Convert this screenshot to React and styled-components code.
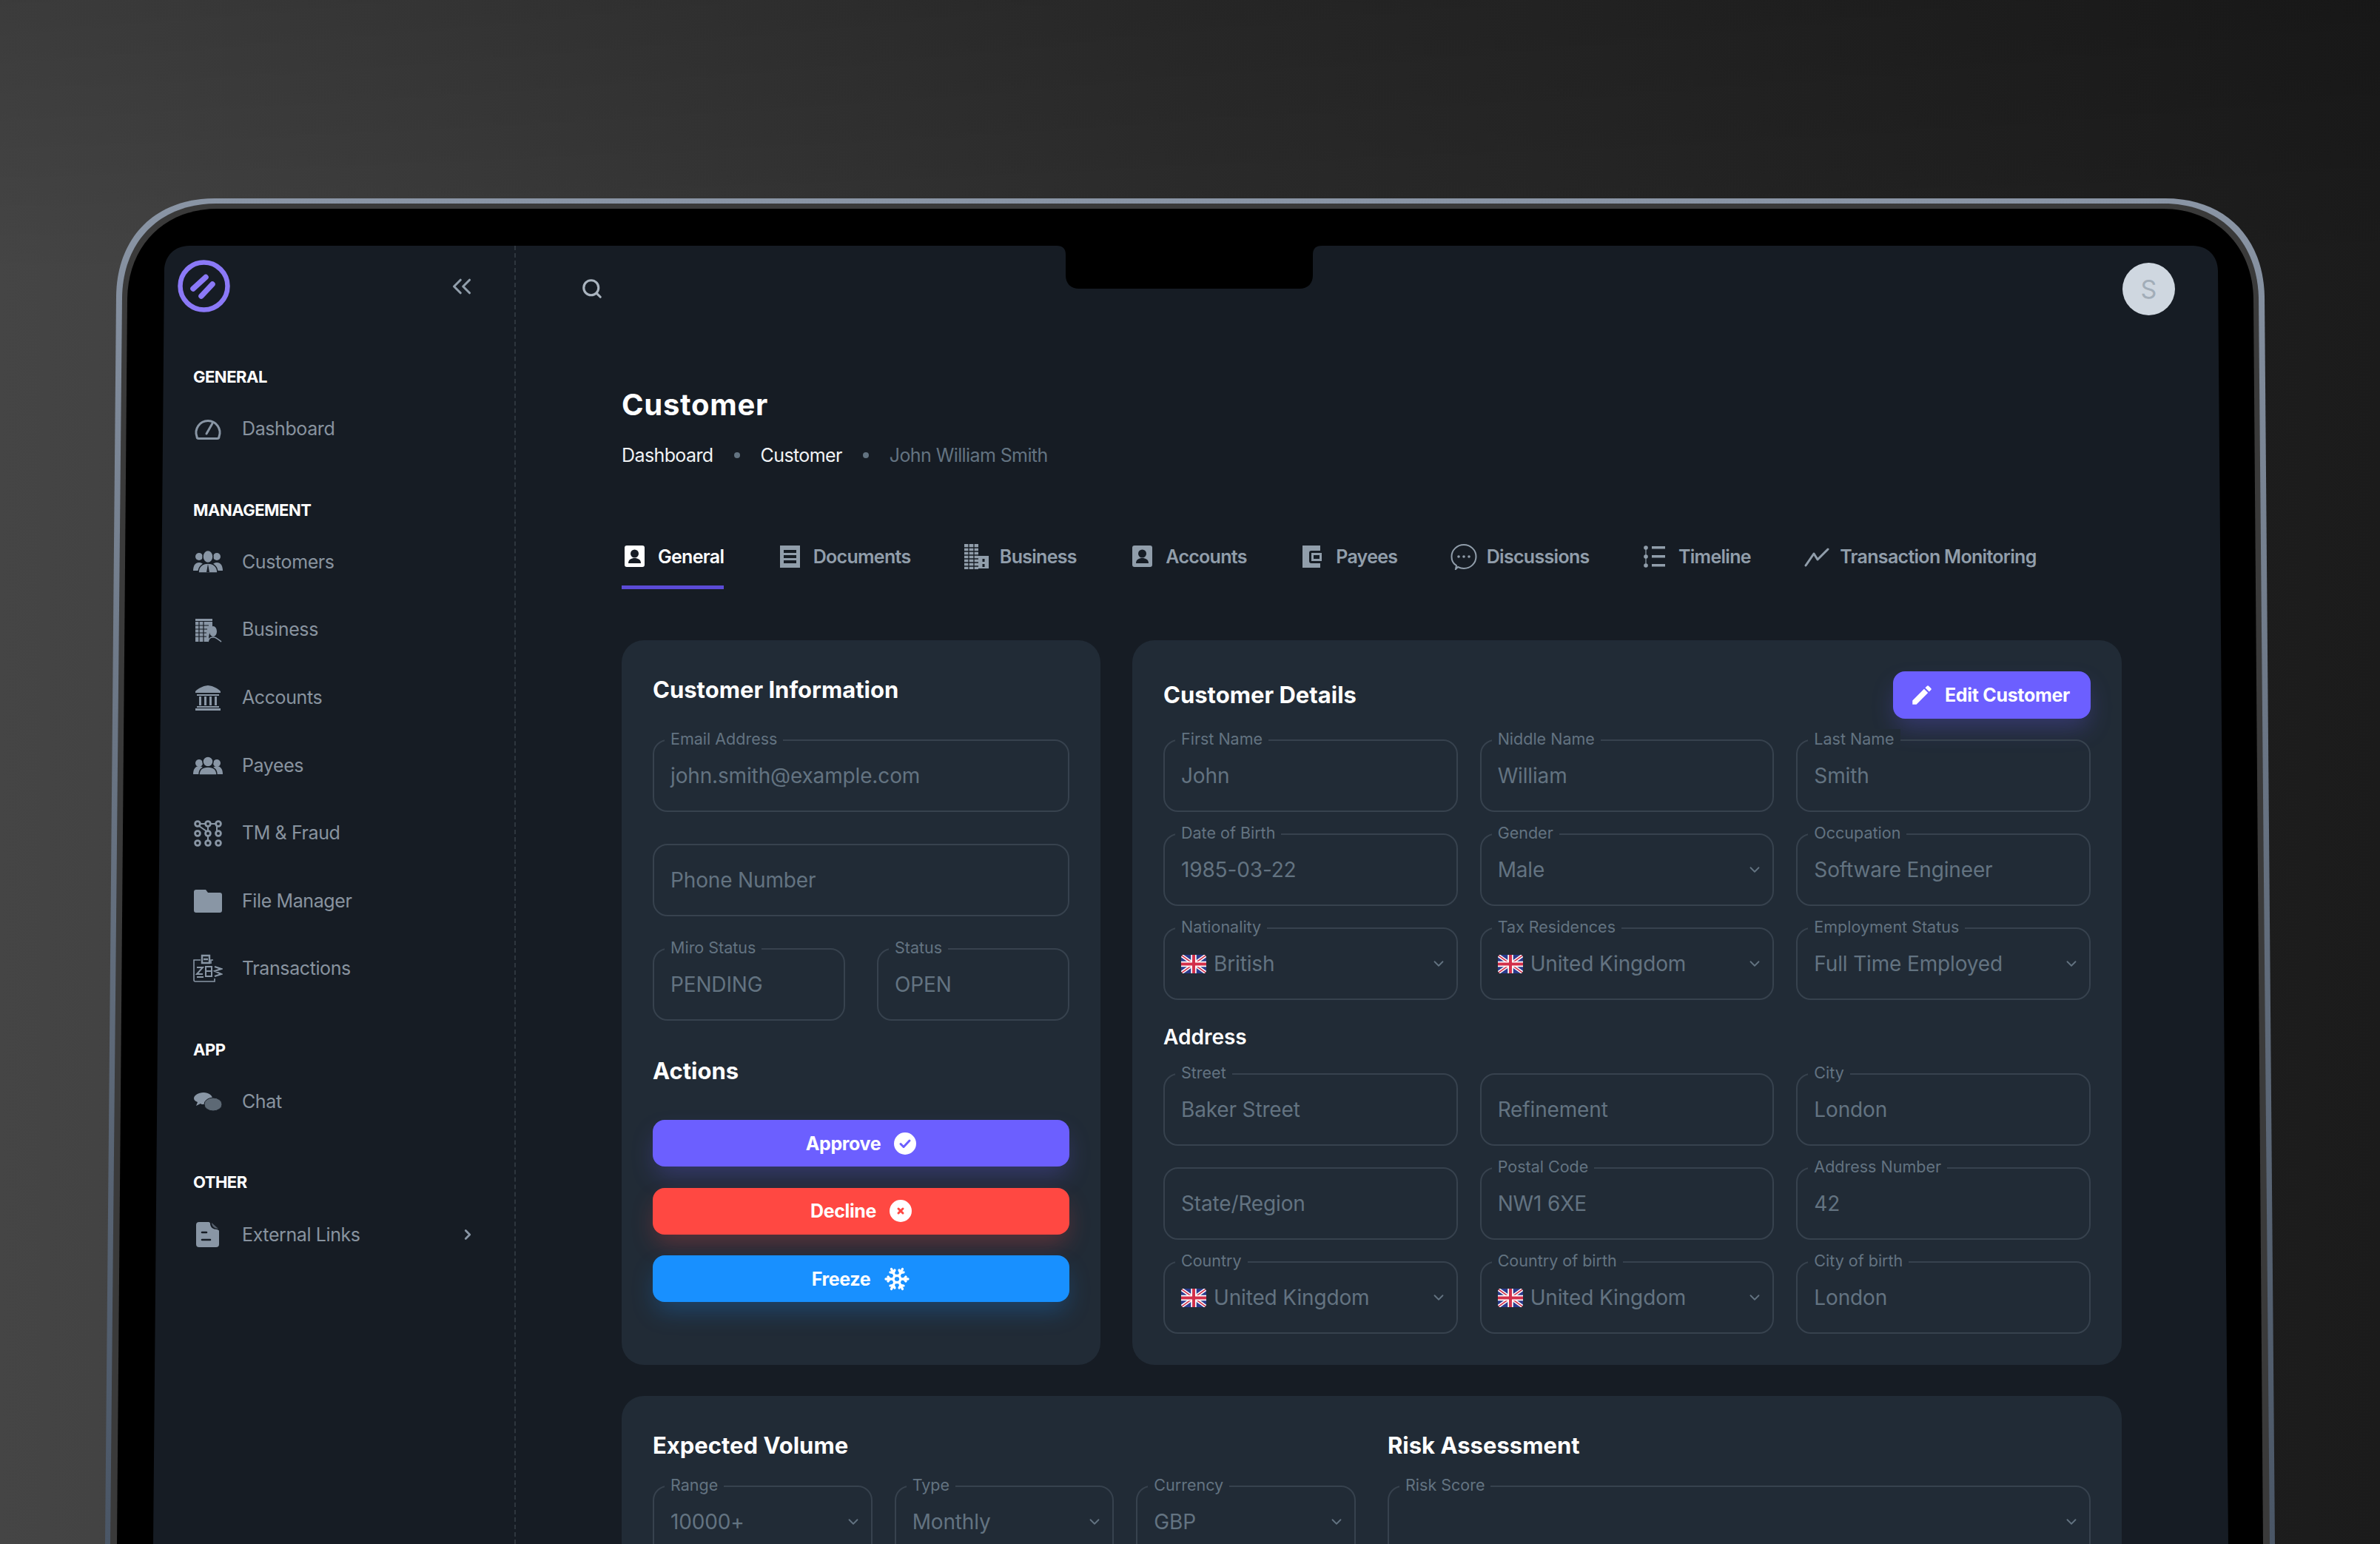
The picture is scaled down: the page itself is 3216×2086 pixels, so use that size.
import React from 'react';
import styled, { createGlobalStyle } from 'styled-components';
import { ChevronDown, ChevronRight, ChevronsLeft, Search, Snowflake } from 'lucide-react';
import { MdEdit } from 'react-icons/md';

const GlobalStyle = createGlobalStyle`
  html, body {
    margin: 0;
    padding: 0;
    background: #2b2b2b;
  }
  * { box-sizing: border-box; }
`;

const S = {
  Page: styled.div`
    position: relative;
    width: 3216px;
    height: 2086px;
    padding: 332px 0 0 222px;
    overflow: hidden;
    font-family: Inter, 'Liberation Sans', sans-serif;
    background:
      linear-gradient(180deg, rgba(0, 0, 0, 0.14) 0%, rgba(0, 0, 0, 0) 18%),
      linear-gradient(90deg, #454545 0%, #2c2c2c 50%, #1b1b1b 100%);
  `,
  Bezel: styled.svg`
    position: absolute;
    top: 0;
    left: 0;
  `,
  Screen: styled.div`
    position: relative;
    display: flex;
    width: 2775px;
    height: 1754px;
    overflow: hidden;
  `,
  Sidebar: styled.aside`
    flex: none;
    width: 475px;
    padding: 19px 0 0 39px;
    border-right: 2px dashed rgba(145, 158, 171, 0.2);
  `,
  SideHead: styled.div`
    display: flex;
    align-items: center;
    justify-content: space-between;
    height: 71px;
    margin: 0 50px 62px -21px;
  `,
  NavSection: styled.div`
    margin-bottom: 38px;
  `,
  NavLabel: styled.div`
    height: 50px;
    color: #fff;
    font-size: 22px;
    font-weight: 700;
    line-height: 50px;
    letter-spacing: -0.5px;
  `,
  NavItem: styled.div`
    display: flex;
    align-items: center;
    gap: 26px;
    height: 91.6px;
    padding-right: 52px;
    color: #88939f;
    font-size: 25px;
    line-height: 1;
    letter-spacing: -0.4px;
    svg { color: #8996a5; flex: none; }
  `,
  NavText: styled.span`
    flex: 1;
  `,
  Collapse: styled(ChevronsLeft)`
    color: #919eab;
  `,
  Main: styled.main`
    flex: 1;
    min-width: 0;
  `,
  TopBar: styled.header`
    display: flex;
    align-items: center;
    justify-content: space-between;
    height: 116px;
    padding: 0 58px 0 88px;
    color: #aab4bf;
  `,
  Avatar: styled.div`
    display: flex;
    align-items: center;
    justify-content: center;
    width: 71px;
    height: 71px;
    border-radius: 50%;
    background: #cfd7e0;
    color: #a2adb8;
    font-size: 34px;
  `,
  Content: styled.div`
    padding: 69px 130px 0 143px;
  `,
  Title: styled.h1`
    margin: 0 0 18px;
    color: #fff;
    font-size: 40px;
    font-weight: 700;
    line-height: 60px;
    letter-spacing: 0.7px;
  `,
  Crumbs: styled.nav`
    display: flex;
    align-items: center;
    height: 40px;
    color: #f1f3f5;
    font-size: 25px;
    letter-spacing: -0.6px;
  `,
  Dot: styled.span`
    width: 8px;
    height: 8px;
    margin: 0 28px;
    border-radius: 50%;
    background: #637381;
  `,
  CrumbLast: styled.span`
    color: #637381;
  `,
  Tabs: styled.div`
    display: flex;
    gap: 71.4px;
    margin: 77px 0 69px;
  `,
  Tab: styled.div`
    display: flex;
    align-items: center;
    gap: 13px;
    height: 84px;
    border-bottom: 5px solid ${(p) => (p.$active ? '#5b4bd6' : 'transparent')};
    color: ${(p) => (p.$active ? '#fff' : '#919eab')};
    font-size: 25px;
    font-weight: 600;
    letter-spacing: -0.7px;
    svg { flex: none; }
  `,
  Columns: styled.div`
    display: grid;
    grid-template-columns: 647px 1fr;
    gap: 43px;
    margin-bottom: 42px;
  `,
  Card: styled.section`
    padding: 42px;
    border-radius: 30px;
    background: #212b36;
  `,
  CardTitle: styled.h2`
    margin: 0 0 42px;
    color: #fff;
    font-size: 31px;
    font-weight: 700;
    line-height: 50px;
  `,
  DetailsHead: styled.div`
    display: flex;
    align-items: center;
    justify-content: space-between;
    height: 64px;
    margin-bottom: 28px;
    h2 { margin: 0; }
  `,
  EditButton: styled.div`
    display: flex;
    align-items: center;
    gap: 14px;
    height: 64px;
    padding: 0 28px 0 22px;
    border-radius: 16px;
    background: #6c5fff;
    color: #fff;
    font-size: 25px;
    font-weight: 700;
    letter-spacing: -0.3px;
    box-shadow: 0 16px 32px -4px rgba(108, 95, 255, 0.28);
  `,
  Stack: styled.div`
    display: flex;
    flex-direction: column;
    gap: 43px;
  `,
  Pair: styled.div`
    display: grid;
    grid-template-columns: 1fr 1fr;
    gap: 43px;
  `,
  ActionsTitle: styled.h2`
    margin: 43px 0 41px;
    color: #fff;
    font-size: 31px;
    font-weight: 700;
    line-height: 50px;
  `,
  Actions: styled.div`
    display: flex;
    flex-direction: column;
    gap: 28.5px;
  `,
  Action: styled.div`
    display: flex;
    align-items: center;
    justify-content: center;
    gap: 18px;
    height: 63px;
    border-radius: 16px;
    background: ${(p) => p.$color};
    color: #fff;
    font-size: 25px;
    font-weight: 700;
    letter-spacing: -0.4px;
    box-shadow: 0 16px 32px -4px ${(p) => p.$color}44;
  `,
  Grid: styled.div`
    display: grid;
    grid-template-columns: repeat(3, 1fr);
    gap: 29px 30px;
  `,
  SubTitle: styled.h3`
    margin: 25px 0 24px;
    color: #fff;
    font-size: 28px;
    font-weight: 600;
    line-height: 50px;
  `,
  BottomColumns: styled.div`
    display: grid;
    grid-template-columns: 1fr 1fr;
    gap: 43px;
  `,
  BottomTitle: styled.h2`
    margin: 0 0 29px;
    color: #fff;
    font-size: 31px;
    font-weight: 700;
    line-height: 50px;
  `,
  Field: styled.div`
    position: relative;
    display: flex;
    align-items: center;
    gap: 10px;
    height: 98px;
    padding: 0 13px 0 22px;
    border: 2px solid #37424e;
    border-radius: 20px;
    color: #637381;
    font-size: 28px;
    letter-spacing: -0.15px;
    svg { flex: none; }
  `,
  FieldLabel: styled.span`
    position: absolute;
    top: -16px;
    left: 14px;
    padding: 0 8px;
    background: #212b36;
    color: #637381;
    font-size: 21.5px;
    line-height: 26px;
    letter-spacing: 0;
  `,
  FieldValue: styled.span`
    flex: 1;
    white-space: nowrap;
  `,
};

/* ---- drawings ---- */

const Bezel = () => (
  <S.Bezel width="3216" height="2086" viewBox="0 0 3216 2086">
    <defs>
      <linearGradient id="rim" x1="0" y1="0" x2="0" y2="1">
        <stop offset="0" stopColor="#8a95a5" />
        <stop offset="0.4" stopColor="#6a7584" />
        <stop offset="1" stopColor="#4a5666" />
      </linearGradient>
    </defs>
    <path d="M142 2086 L157 400 C158 320 210 268 290 268 H2926 C3006 268 3058 320 3060 400 L3074 2086 Z" fill="url(#rim)" />
    <path d="M149 2086 L165 402 C166 326 216 275 292 275 H2924 C3000 275 3050 326 3052 402 L3067 2086 Z" fill="#3a3a3a" />
    <path d="M158 2086 L172 404 C173 332 222 282 294 282 H2922 C2994 282 3044 332 3045 404 L3058 2086 Z" fill="#000" />
    <path d="M207 2086 L222 366 C222 346 236 332 256 332 H2963 C2983 332 2997 346 2997 366 L3011 2086 Z" fill="#161c24" />
    <path d="M1428 332 C1436 332 1440 336 1440 344 V372 C1440 383 1447 390 1458 390 H1756 C1767 390 1774 383 1774 372 V344 C1774 336 1778 332 1786 332 Z" fill="#000" />
  </S.Bezel>
);

const Logo = () => (
  <svg width="71" height="71" viewBox="0 0 71 71" fill="none" stroke="#8b79f7" strokeLinecap="round">
    <circle cx="35.5" cy="35.5" r="32" strokeWidth="6.5" />
    <path d="M21 39 L38 23.5" strokeWidth="7.5" />
    <path d="M32 49 L47 33" strokeWidth="7.5" />
  </svg>
);

const NavIcon = ({ children, ...rest }) => (
  <svg width="40" height="40" viewBox="0 0 40 40" fill="currentColor" {...rest}>{children}</svg>
);

const Gauge = () => (
  <NavIcon>
    <g fill="none" stroke="currentColor" strokeWidth="3" strokeLinecap="round">
      <path d="M5 30a16 16 0 1 1 30 0 2.5 2.5 0 0 1-2.5 2.5h-25A2.5 2.5 0 0 1 5 30z" />
      <path d="M18 26 L26 12" />
    </g>
  </NavIcon>
);

const People = ({ tall }) => (
  <NavIcon>
    <circle cx="8" cy={tall ? 13 : 17} r="5" />
    <circle cx="32" cy={tall ? 13 : 17} r="5" />
    <path d="M0 32c0-7 3-11 8-11s8 4 8 11z" />
    <path d="M24 32c0-7 3-11 8-11s8 4 8 11z" />
    <g stroke="#161c24" strokeWidth="1.5">
      <ellipse cx="20" cy={tall ? 13 : 15} rx="7" ry={tall ? 8.5 : 7} />
      <path d={tall ? 'M7 35c0-8 5-13 13-13s13 5 13 13z' : 'M8 33c0-8 5-11 12-11s12 3 12 11z'} />
    </g>
    {tall && <path d="M20 23 l-2 11 h4z" fill="#161c24" />}
  </NavIcon>
);

const BusinessIcon = () => (
  <NavIcon>
    <path d="M3 5h23v3H3z" />
    <path d="M3 9h23v12c-4 1-5 5-5 15H3z" />
    <g stroke="#161c24" strokeWidth="1.2">
      <path d="M3 14h18M3 19h16M3 24h15M3 29h15" />
      <path d="M8 9v27M14 9v27" />
    </g>
    <ellipse cx="27" cy="22" rx="5" ry="7" />
    <path d="M20 36c1-4 3-6 6-6h2c3 0 6 3 10 6" fill="none" stroke="currentColor" strokeWidth="1.6" />
  </NavIcon>
);

const BankIcon = () => (
  <NavIcon>
    <path d="M20 3 C28 4 33 7 37 11 V13 H3 V11 C7 7 12 4 20 3z" />
    <path d="M5 15h30v2H5z" />
    <path d="M8 18h3v12H8zM15 18h3v12h-3zM22 18h3v12h-3zM29 18h3v12h-3z" />
    <path d="M5 31h30v2H5zM3 34h34v3H3z" />
  </NavIcon>
);

const FlowIcon = () => (
  <NavIcon>
    <g fill="none" stroke="currentColor" strokeWidth="2.8">
      {[7, 20, 33].map((y) => [6, 20, 34].map((x) => (
        <circle key={`${x}-${y}`} cx={x} cy={y} r="3.4" />
      )))}
      <path d="M9.5 7h7M23.5 7h7M8 10l10 7M20 10.5V16.5M20 23.5V29.5M32 10.5V16.5" strokeWidth="2" />
    </g>
  </NavIcon>
);

const FolderIcon = () => (
  <NavIcon>
    <path d="M1 8a3 3 0 0 1 3-3h13l3 4h16a3 3 0 0 1 3 3v21a3 3 0 0 1-3 3H4a3 3 0 0 1-3-3z" />
  </NavIcon>
);

const TransactionsIcon = () => (
  <NavIcon>
    <g fill="none" stroke="currentColor" strokeWidth="1.6">
      <path d="M10 8H1v27a2 2 0 0 0 2 2h26v-4" />
      <path d="M27 8h-3v5" />
      <path d="M12 2h10v10H12zM14 7h6" strokeWidth="2.4" />
      <path d="M5 18h8l-8 9h8M5 31h9M17 17h8v13h-8zM17 23h8M29 17l9 3-9 3 9 4-9 3" strokeWidth="2" />
    </g>
  </NavIcon>
);

const ChatIcon = () => (
  <NavIcon>
    <path d="M14 7c7 0 12 4 12 8s-5 8-12 8c-2 0-3 0-4-1l-6 3 2-5c-3-1-5-3-5-5 0-4 6-8 13-8z" />
    <ellipse cx="27" cy="23" rx="12" ry="9" fill="#5d6975" stroke="#161c24" strokeWidth="1" />
  </NavIcon>
);

const DocIcon = () => (
  <NavIcon>
    <path d="M8 3h13c1 0 2 1 2 2 0 5 4 8 9 8 1 0 3 1 3 2v18a4 4 0 0 1-4 4H8a4 4 0 0 1-4-4V7a4 4 0 0 1 4-4z" />
    <path d="M25 4l9 8c-5 0-9-3-9-8z" opacity="0.55" />
    <path d="M12 17h6M12 27h11" stroke="#161c24" strokeWidth="2.6" strokeLinecap="round" />
  </NavIcon>
);

const TabIcon = ({ children, ...rest }) => (
  <svg width="36" height="36" viewBox="0 0 36 36" fill="currentColor" {...rest}>{children}</svg>
);

const ContactIcon = () => (
  <TabIcon>
    <rect x="4" y="3" width="27" height="29" rx="3" />
    <circle cx="17.5" cy="14" r="5.5" fill="#161c24" />
    <path d="M9 27c0-5 4-7 8.5-7S26 22 26 27z" fill="#161c24" />
  </TabIcon>
);

const ListDocIcon = () => (
  <TabIcon>
    <path d="M4 3h27v30H4z" />
    <g fill="#161c24">
      <path d="M9 9h17v4H9zM9 16h17v4H9zM9 23h17v4H9z" />
    </g>
  </TabIcon>
);

const TowerIcon = () => (
  <TabIcon>
    <path d="M1 1h19v34H1z" />
    <path d="M20 17h14v17H20z" />
    <g stroke="#161c24" strokeWidth="1.3">
      <path d="M1 6h19M1 11h19M1 16h19M1 21h19M1 26h19M1 31h19M7 1v34M14 1v34" />
      <path d="M27 21v4M27 28v4" strokeWidth="3" />
    </g>
  </TabIcon>
);

const WalletIcon = () => (
  <TabIcon>
    <path d="M4 3h24v7H16a3 3 0 0 0-3 3v11a3 3 0 0 0 3 3h12v6H4z" />
    <path d="M16 13h14v11H16zM19 16h8v5h-8z" fillRule="evenodd" />
  </TabIcon>
);

const BubbleIcon = () => (
  <TabIcon>
    <path d="M8 30 C3 27 1.5 22 1.5 18 C1.5 9 9 2 18 2 S34.5 9 34.5 18 S27 34 18 34 C15 34 12 33 10 32 L7 35z" fill="none" stroke="currentColor" strokeWidth="2" />
    <circle cx="11" cy="18" r="1.8" />
    <circle cx="18" cy="18" r="1.8" />
    <circle cx="25" cy="18" r="1.8" />
  </TabIcon>
);

const TimelineIcon = () => (
  <TabIcon>
    <path d="M5 5v26" stroke="currentColor" strokeWidth="1.2" />
    <circle cx="5" cy="6" r="2.8" />
    <circle cx="5" cy="18" r="2.8" />
    <circle cx="5" cy="30" r="2.8" />
    <path d="M13 4h18v3.5H13zM13 16h18v3.5H13zM13 28h18v3.5H13z" />
  </TabIcon>
);

const TrendIcon = () => (
  <TabIcon>
    <path d="M3 30 L14 14 L19 22 L33 8" fill="none" stroke="currentColor" strokeWidth="3" strokeLinecap="round" strokeLinejoin="round" />
  </TabIcon>
);

const Flag = () => (
  <svg width="34" height="25" viewBox="0 0 60 44">
    <rect width="60" height="44" rx="8" fill="#2b3a8c" />
    <path d="M2 2 L58 42 M58 2 L2 42" stroke="#fff" strokeWidth="8" />
    <path d="M2 2 L58 42 M58 2 L2 42" stroke="#d22f4a" strokeWidth="3" />
    <path d="M30 0 V44 M0 22 H60" stroke="#fff" strokeWidth="13" />
    <path d="M30 0 V44 M0 22 H60" stroke="#d22f4a" strokeWidth="7" />
  </svg>
);

const Badge = ({ color, children }) => (
  <svg width="30" height="30" viewBox="0 0 30 30">
    <circle cx="15" cy="15" r="15" fill="#fff" />
    <g fill="none" stroke={color} strokeWidth="3" strokeLinecap="round" strokeLinejoin="round">{children}</g>
  </svg>
);

/* ---- data ---- */

const NAV = [
  { label: 'GENERAL', items: [{ text: 'Dashboard', icon: <Gauge /> }] },
  {
    label: 'MANAGEMENT',
    items: [
      { text: 'Customers', icon: <People tall /> },
      { text: 'Business', icon: <BusinessIcon /> },
      { text: 'Accounts', icon: <BankIcon /> },
      { text: 'Payees', icon: <People /> },
      { text: 'TM & Fraud', icon: <FlowIcon /> },
      { text: 'File Manager', icon: <FolderIcon /> },
      { text: 'Transactions', icon: <TransactionsIcon /> },
    ],
  },
  { label: 'APP', items: [{ text: 'Chat', icon: <ChatIcon /> }] },
  { label: 'OTHER', items: [{ text: 'External Links', icon: <DocIcon />, more: true }] },
];

const TABS = [
  { text: 'General', icon: <ContactIcon />, active: true },
  { text: 'Documents', icon: <ListDocIcon /> },
  { text: 'Business', icon: <TowerIcon /> },
  { text: 'Accounts', icon: <ContactIcon /> },
  { text: 'Payees', icon: <WalletIcon /> },
  { text: 'Discussions', icon: <BubbleIcon /> },
  { text: 'Timeline', icon: <TimelineIcon /> },
  { text: 'Transaction Monitoring', icon: <TrendIcon /> },
];

const DETAILS = [
  { label: 'First Name', value: 'John' },
  { label: 'Niddle Name', value: 'William' },
  { label: 'Last Name', value: 'Smith' },
  { label: 'Date of Birth', value: '1985-03-22' },
  { label: 'Gender', value: 'Male', select: true },
  { label: 'Occupation', value: 'Software Engineer' },
  { label: 'Nationality', value: 'British', select: true, flag: true },
  { label: 'Tax Residences', value: 'United Kingdom', select: true, flag: true },
  { label: 'Employment Status', value: 'Full Time Employed', select: true },
];

const ADDRESS = [
  { label: 'Street', value: 'Baker Street' },
  { value: 'Refinement' },
  { label: 'City', value: 'London' },
  { value: 'State/Region' },
  { label: 'Postal Code', value: 'NW1 6XE' },
  { label: 'Address Number', value: '42' },
  { label: 'Country', value: 'United Kingdom', select: true, flag: true },
  { label: 'Country of birth', value: 'United Kingdom', select: true, flag: true },
  { label: 'City of birth', value: 'London' },
];

const VOLUME = [
  { label: 'Range', value: '10000+', select: true },
  { label: 'Type', value: 'Monthly', select: true },
  { label: 'Currency', value: 'GBP', select: true },
];

const Field = ({ label, value, select, flag }) => (
  <S.Field>
    {label && <S.FieldLabel>{label}</S.FieldLabel>}
    {flag && <Flag />}
    <S.FieldValue>{value}</S.FieldValue>
    {select && <ChevronDown size={22} strokeWidth={2} />}
  </S.Field>
);

const App = () => (
  <S.Page>
    <GlobalStyle />
    <Bezel />
    <S.Screen>
      <S.Sidebar>
        <S.SideHead>
          <Logo />
          <S.Collapse size={42} strokeWidth={1.8} />
        </S.SideHead>
        {NAV.map((section) => (
          <S.NavSection key={section.label}>
            <S.NavLabel>{section.label}</S.NavLabel>
            {section.items.map((item) => (
              <S.NavItem key={item.text}>
                {item.icon}
                <S.NavText>{item.text}</S.NavText>
                {item.more && <ChevronRight size={22} strokeWidth={3} />}
              </S.NavItem>
            ))}
          </S.NavSection>
        ))}
      </S.Sidebar>
      <S.Main>
        <S.TopBar>
          <Search size={30} strokeWidth={2.5} />
          <S.Avatar>S</S.Avatar>
        </S.TopBar>
        <S.Content>
          <S.Title>Customer</S.Title>
          <S.Crumbs>
            <span>Dashboard</span>
            <S.Dot />
            <span>Customer</span>
            <S.Dot />
            <S.CrumbLast>John William Smith</S.CrumbLast>
          </S.Crumbs>
          <S.Tabs>
            {TABS.map((tab) => (
              <S.Tab key={tab.text} $active={tab.active}>
                {tab.icon}
                {tab.text}
              </S.Tab>
            ))}
          </S.Tabs>
          <S.Columns>
            <S.Card>
              <S.CardTitle>Customer Information</S.CardTitle>
              <S.Stack>
                <Field label="Email Address" value="john.smith@example.com" />
                <Field value="Phone Number" />
                <S.Pair>
                  <Field label="Miro Status" value="PENDING" />
                  <Field label="Status" value="OPEN" />
                </S.Pair>
              </S.Stack>
              <S.ActionsTitle>Actions</S.ActionsTitle>
              <S.Actions>
                <S.Action $color="#6c5fff">
                  Approve
                  <Badge color="#6c5fff"><path d="M9 15.5l4 4 8-8.5" /></Badge>
                </S.Action>
                <S.Action $color="#ff4842">
                  Decline
                  <Badge color="#ff4842"><path d="M12 12l6 6M18 12l-6 6" /></Badge>
                </S.Action>
                <S.Action $color="#1890ff">
                  Freeze
                  <Snowflake size={36} strokeWidth={2.2} />
                </S.Action>
              </S.Actions>
            </S.Card>
            <S.Card>
              <S.DetailsHead>
                <S.CardTitle>Customer Details</S.CardTitle>
                <S.EditButton>
                  <MdEdit size={34} />
                  Edit Customer
                </S.EditButton>
              </S.DetailsHead>
              <S.Grid>
                {DETAILS.map((field) => <Field key={field.label} {...field} />)}
              </S.Grid>
              <S.SubTitle>Address</S.SubTitle>
              <S.Grid>
                {ADDRESS.map((field) => <Field key={field.value + field.label} {...field} />)}
              </S.Grid>
            </S.Card>
          </S.Columns>
          <S.Card>
            <S.BottomColumns>
              <div>
                <S.BottomTitle>Expected Volume</S.BottomTitle>
                <S.Grid>
                  {VOLUME.map((field) => <Field key={field.label} {...field} />)}
                </S.Grid>
              </div>
              <div>
                <S.BottomTitle>Risk Assessment</S.BottomTitle>
                <Field label="Risk Score" select />
              </div>
            </S.BottomColumns>
          </S.Card>
        </S.Content>
      </S.Main>
    </S.Screen>
  </S.Page>
);

export default App;
